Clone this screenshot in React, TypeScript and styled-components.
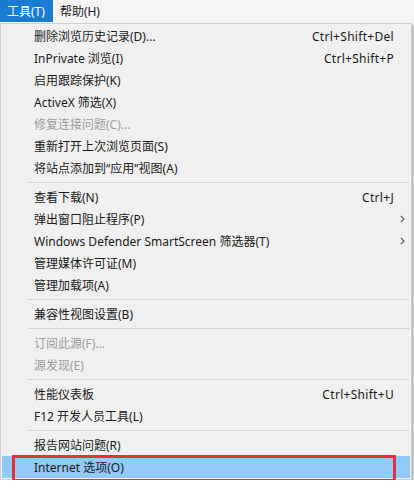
import React from "react";
import styled, { createGlobalStyle } from "styled-components";

const GlobalStyle = createGlobalStyle`
  body {
    margin: 0;
    background: #ffffff;
    font-family: "Noto Sans", "Noto Sans CJK SC", sans-serif;
    font-size: 12px;
    color: #1a1a1a;
  }
`;

const MenuBar = styled.div`
  display: flex;
  height: 23px;
  background: #f5f5f5;
`;

const MenuBarItem = styled.div<{ $active?: boolean }>`
  display: flex;
  align-items: center;
  padding: 0 8px 0 7px;
  height: 22px;
  background: ${(p) => (p.$active ? "#1a7bd2" : "transparent")};
  color: ${(p) => (p.$active ? "#ffffff" : "#1a1a1a")};
`;

const Dropdown = styled.div`
  box-sizing: border-box;
  width: 412px;
  margin-top: 0;
  padding: 1px;
  border: 1px solid #cfcfcf;
  background: #f0f0f0;
  box-shadow: 2px 2px 2px rgba(0, 0, 0, 0.28);
`;

const Row = styled.div<{ $disabled?: boolean; $selected?: boolean }>`
  position: relative;
  display: flex;
  align-items: center;
  height: 22px;
  padding-left: 32px;
  color: ${(p) => (p.$disabled ? "#9d9d9d" : "#1a1a1a")};
  background: ${(p) => (p.$selected ? "#91c9f7" : "transparent")};
  white-space: nowrap;
`;

const Label = styled.span`
  flex: 1;
`;

const Shortcut = styled.span`
  letter-spacing: 0.3px;
`;

const ArrowSlot = styled.span`
  display: flex;
  align-items: center;
  justify-content: center;
  width: 16px;
  height: 100%;
`;

const Separator = styled.div`
  display: flex;
  align-items: center;
  height: 7px;
  padding-left: 26px;

  &::after {
    content: "";
    flex: 1;
    height: 1px;
    background: #d5d5d5;
  }
`;

const Callout = styled.div`
  position: absolute;
  left: 10px;
  top: -1px;
  box-sizing: border-box;
  width: 384px;
  height: 27px;
  border: 3px solid #e8303a;
  pointer-events: none;
`;

type Item =
  | { sep: true }
  | {
      sep?: false;
      label: string;
      shortcut?: string;
      sub?: boolean;
      disabled?: boolean;
      selected?: boolean;
    };

const items: Item[] = [
  { label: "删除浏览历史记录(D)...", shortcut: "Ctrl+Shift+Del" },
  { label: "InPrivate 浏览(I)", shortcut: "Ctrl+Shift+P" },
  { label: "启用跟踪保护(K)" },
  { label: "ActiveX 筛选(X)" },
  { label: "修复连接问题(C)...", disabled: true },
  { label: "重新打开上次浏览页面(S)" },
  { label: "将站点添加到“应用”视图(A)" },
  { sep: true },
  { label: "查看下载(N)", shortcut: "Ctrl+J" },
  { label: "弹出窗口阻止程序(P)", sub: true },
  { label: "Windows Defender SmartScreen 筛选器(T)", sub: true },
  { label: "管理媒体许可证(M)" },
  { label: "管理加载项(A)" },
  { sep: true },
  { label: "兼容性视图设置(B)" },
  { sep: true },
  { label: "订阅此源(F)...", disabled: true },
  { label: "源发现(E)", disabled: true, sub: true },
  { sep: true },
  { label: "性能仪表板", shortcut: "Ctrl+Shift+U" },
  { label: "F12 开发人员工具(L)" },
  { sep: true },
  { label: "报告网站问题(R)" },
  { label: "Internet 选项(O)", selected: true },
];

const Chevron: React.FC<{ color: string }> = ({ color }) => (
  <svg width="5" height="8" viewBox="0 0 5 8">
    <path d="M0.8 0.8 L4 4 L0.8 7.2" fill="none" stroke={color} strokeWidth="1.1" />
  </svg>
);

const App: React.FC = () => {
  return (
    <>
      <GlobalStyle />
      <MenuBar>
        <MenuBarItem $active>工具(T)</MenuBarItem>
        <MenuBarItem>帮助(H)</MenuBarItem>
      </MenuBar>
      <Dropdown>
        {items.map((item, i) =>
          item.sep ? (
            <Separator key={i} />
          ) : (
            <Row key={i} $disabled={item.disabled} $selected={item.selected}>
              <Label>{item.label}</Label>
              {item.shortcut && <Shortcut>{item.shortcut}</Shortcut>}
              <ArrowSlot>
                {item.sub && !item.disabled && <Chevron color="#555" />}
              </ArrowSlot>
              {item.selected && <Callout />}
            </Row>
          )
        )}
      </Dropdown>
    </>
  );
};

export default App;
